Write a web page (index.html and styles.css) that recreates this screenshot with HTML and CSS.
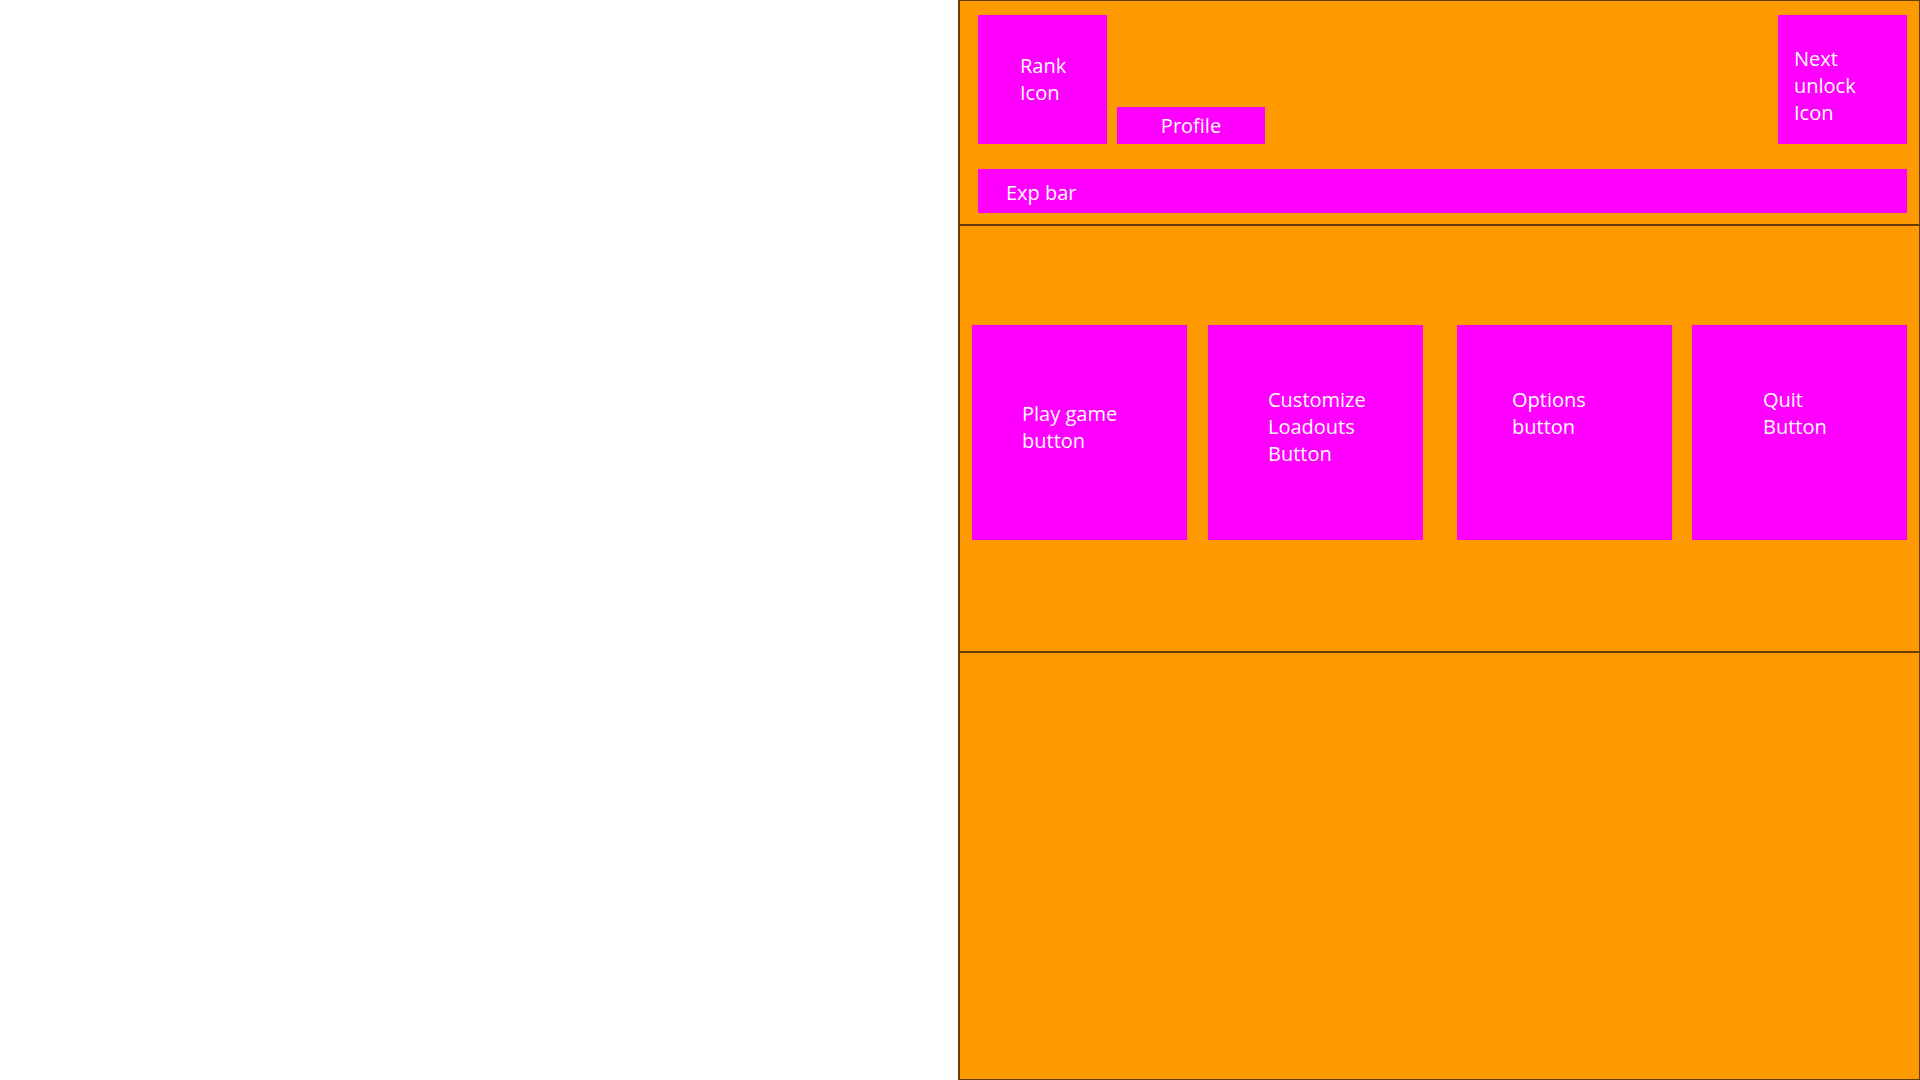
FILE: index.html
```html
<!DOCTYPE html>
<html>
<head>
<meta charset="utf-8">
<link rel="stylesheet" href="styles.css">
</head>
<body>
<div class="blank"></div>
<div class="panel">
  <header class="header">
    <div class="top-row">
      <div class="box rank">Rank<br>Icon</div>
      <div class="box profile">Profile</div>
      <div class="spacer"></div>
      <div class="box unlock">Next<br>unlock<br>Icon</div>
    </div>
    <div class="box exp">Exp bar</div>
  </header>
  <section class="menu">
    <div class="box btn play">Play game<br>button</div>
    <div class="box btn customize">Customize<br>Loadouts<br>Button</div>
    <div class="box btn options">Options<br>button</div>
    <div class="box btn quit">Quit<br>Button</div>
  </section>
  <section class="footer"></section>
</div>
</body>
</html>
```

FILE: styles.css
```css
html, body {
  margin: 0;
  padding: 0;
}
body {
  width: 1920px;
  height: 1080px;
  background: #ffffff;
  display: flex;
  font-family: "Open Sans", "Noto Sans", sans-serif;
  font-size: 20px;
  color: #ffffff;
  overflow: hidden;
}
.blank {
  width: 958px;
  flex: none;
}
.panel {
  width: 962px;
  height: 1080px;
  box-sizing: border-box;
  background: #ff9900;
  border: 1px solid rgba(0, 0, 0, 0.6);
  border-left-width: 2px;
  display: flex;
  flex-direction: column;
}
.box {
  background: #ff00ff;
  box-sizing: border-box;
}
.header {
  box-sizing: border-box;
  height: 225px;
  padding: 14px 12px 0 18px;
  border-bottom: 2px solid rgba(0, 0, 0, 0.6);
}
.top-row {
  display: flex;
  align-items: flex-end;
}
.rank {
  width: 129px;
  height: 129px;
  padding: 37px 0 0 42px;
}
.profile {
  width: 148px;
  height: 37px;
  margin-left: 10px;
  display: flex;
  align-items: center;
  justify-content: center;
}
.spacer {
  flex: 1;
}
.unlock {
  width: 129px;
  height: 129px;
  padding: 30px 0 0 16px;
}
.exp {
  margin-top: 25px;
  height: 44px;
  padding: 2px 0 0 28px;
  display: flex;
  align-items: center;
}
.menu {
  box-sizing: border-box;
  height: 427px;
  padding: 99px 0 0 12px;
  display: flex;
  align-items: flex-start;
  border-bottom: 2px solid rgba(0, 0, 0, 0.6);
}
.btn {
  width: 215px;
  height: 215px;
  flex: none;
}
.play {
  padding: 75px 0 0 50px;
}
.customize {
  margin-left: 21px;
  padding: 61px 0 0 60px;
}
.options {
  margin-left: 34px;
  padding: 61px 0 0 55px;
}
.quit {
  margin-left: 20px;
  padding: 61px 0 0 71px;
}
.footer {
  flex: 1;
}
```
